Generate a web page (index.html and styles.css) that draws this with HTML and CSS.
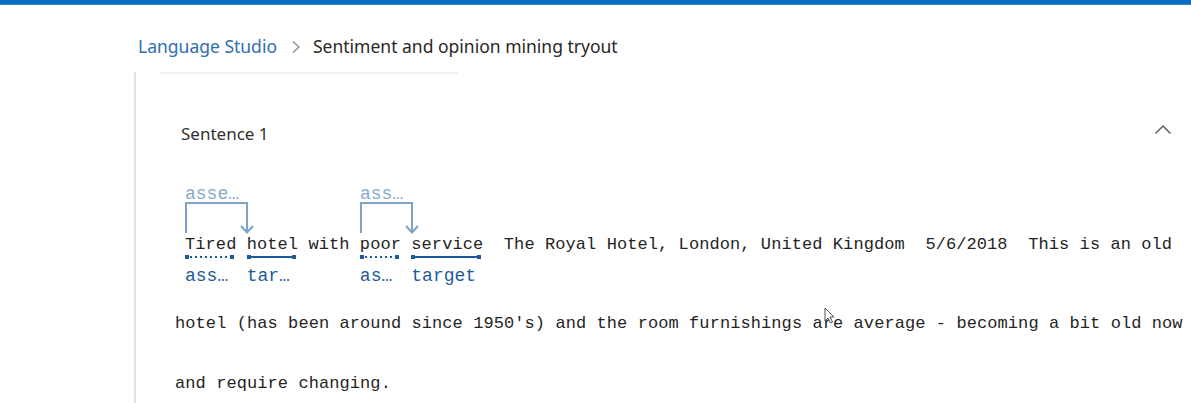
FILE: index.html
```html
<!DOCTYPE html>
<html lang="en">
<head>
<meta charset="utf-8">
<title>Sentiment and opinion mining tryout</title>
<link rel="stylesheet" href="styles.css">
</head>
<body>
<div class="topbar"></div>
<nav class="breadcrumb">
  <a class="crumb-link" href="#">Language Studio</a>
  <svg class="crumb-sep" width="10" height="14" viewBox="0 0 10 14"><polyline points="2,1.5 8,7 2,12.5" fill="none" stroke="#8a8886" stroke-width="1.2"/></svg>
  <span class="crumb-current">Sentiment and opinion mining tryout</span>
</nav>
<main class="content">
  <div class="card-stub"></div>
  <section class="sentence">
    <header class="sentence-head">
      <span class="sentence-title">Sentence 1</span>
      <svg class="collapse" width="18" height="12" viewBox="0 0 18 12"><polyline points="1.5,9.5 9,2 16.5,9.5" fill="none" stroke="#5f5f5f" stroke-width="1.5"/></svg>
    </header>
    <div class="sentence-body">
      <div class="line1"><svg class="links" width="260" height="56" viewBox="0 0 260 56"><g fill="none" stroke="#7ea5c9" stroke-width="2"><polyline points="11,53 11,23 72,23 72,52"/><polyline points="66,46 72,52.5 78,46"/><polyline points="186,53 186,23 237,23 237,52"/><polyline points="231,46 237,52.5 243,46"/></g></svg><span class="link-label l1">asse…</span><span class="link-label l2">ass…</span><span class="tok"><span class="word">Tired</span><span class="bar dotted"></span><span class="tag">ass…</span></span> <span class="tok"><span class="word">hotel</span><span class="bar"></span><span class="tag">tar…</span></span> with <span class="tok"><span class="word">poor</span><span class="bar dotted"></span><span class="tag">as…</span></span> <span class="tok"><span class="word">service</span><span class="bar"></span><span class="tag">target</span></span>  The Royal Hotel, London, United Kingdom  5/6/2018  This is an old</div>
      <div class="line">hotel (has been around since 1950's) and the room furnishings are average - becoming a bit old now</div>
      <div class="line">and require changing.</div>
    </div>
  </section>
  <svg class="cursor" width="12" height="18" viewBox="0 0 12 18"><path d="M1 1 L1 14 L4 11 L6.5 16 L8.5 15 L6 10 L10 10 Z" fill="#fff" stroke="#555" stroke-width="1"/></svg>
</main>
</body>
</html>
```
FILE: styles.css
```css
html, body {
  margin: 0;
  padding: 0;
  background: #ffffff;
  height: 100%;
  overflow: hidden;
}
body {
  font-family: "Segoe UI", "Noto Sans", "Open Sans", sans-serif;
  color: #323130;
}
.topbar {
  height: 5px;
  background: #0b6cc6;
  border-bottom: 1px solid #3d7fbf;
  box-sizing: border-box;
}
.breadcrumb {
  height: 65px;
  box-sizing: border-box;
  padding: 30px 0 0 138px;
  display: flex;
  align-items: flex-start;
  font-size: 17.5px;
  line-height: 22px;
}
.crumb-link {
  color: #2f6fb2;
  text-decoration: none;
}
.crumb-sep {
  margin: 5px 12px 0 14px;
}
.crumb-current {
  color: #292827;
}
.content {
  position: relative;
  margin-left: 134px;
  border-left: 2px solid #e3e3e3;
  height: 340px;
}
.card-stub {
  margin: 2px 0 0 24px;
  width: 298px;
  height: 1px;
  background: #ececec;
  box-shadow: 0 1px 3px rgba(0,0,0,0.12);
}
.sentence {
  padding: 40px 0 0 39px;
}
.sentence-head {
  display: flex;
  justify-content: space-between;
  align-items: center;
  height: 40px;
  padding-right: 19px;
  margin-left: 6px;
}
.sentence-title {
  font-size: 17px;
  color: #323130;
}
.collapse {
  margin-top: -6px;
}
.sentence-body {
  margin-top: 28px;
  font-family: "Liberation Mono", "DejaVu Sans Mono", monospace;
  font-size: 17px;
  letter-spacing: 0.08px;
  color: #252423;
}
.line1 {
  position: relative;
  white-space: pre;
  padding: 54px 0 8px 10px;
  line-height: 20px;
}
.links {
  position: absolute;
  left: 0;
  top: -1px;
}
.link-label {
  position: absolute;
  top: 3px;
  font-size: 18px;
  letter-spacing: 0;
  line-height: 20px;
  color: #86aacb;
}
.link-label.l1 { left: 10px; }
.link-label.l2 { left: 185px; }
.tok {
  display: inline-flex;
  flex-direction: column;
  vertical-align: baseline;
}
.word {
  line-height: 20px;
}
.bar {
  position: relative;
  height: 2px;
  margin: 1px 2px 0 0;
  background: #1d5b98;
}
.bar::before, .bar::after {
  content: "";
  position: absolute;
  top: -1px;
  width: 4px;
  height: 4px;
  background: #1d5b98;
}
.bar::before { left: 0; }
.bar::after { right: 0; }
.bar.dotted {
  background: repeating-linear-gradient(90deg, #1d5b98 0 2px, transparent 2px 5px);
}
.tag {
  margin-top: 8px;
  font-size: 18px;
  letter-spacing: 0;
  line-height: 20px;
  color: #1c5d9c;
}
.line {
  white-space: pre;
  line-height: 60px;
}
.cursor {
  position: absolute;
  left: 688px;
  top: 235px;
}
```
